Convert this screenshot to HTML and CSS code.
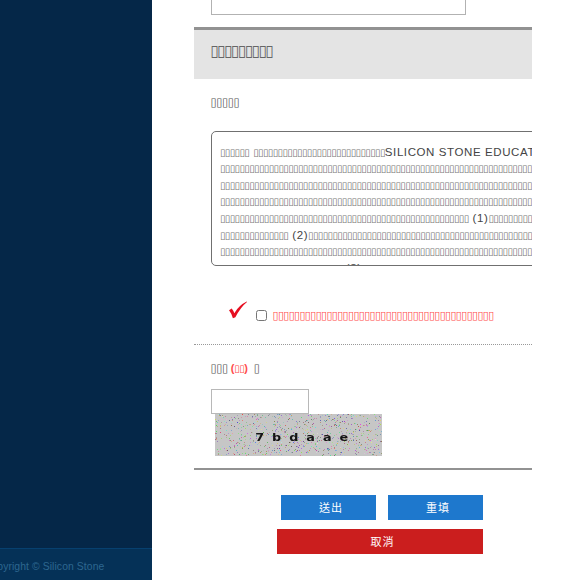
FILE: index.html
```
<!DOCTYPE html>
<html lang="zh-Hant">
<head>
<meta charset="utf-8">
<title>Silicon Stone</title>
<link rel="stylesheet" href="styles.css">
</head>
<body>
<div class="page">
  <aside class="sidebar">
    <footer class="copyright"><span>Copyright © Silicon Stone</span></footer>
  </aside>
  <main class="content">
    <div class="field-large"></div>
    <h2 class="section-title">▯▯▯▯▯▯▯▯▯</h2>
    <p class="label terms-label">▯▯▯▯▯</p>
    <div class="terms">
      <p><i>▯▯▯▯▯▯</i><b class="gap"></b><i>▯▯▯▯▯▯▯▯▯▯▯▯▯▯▯▯▯▯▯▯▯▯▯▯▯▯▯</i>SILICON STONE EDUCATION</p>
      <p><i>▯▯▯▯▯▯▯▯▯▯▯▯▯▯▯▯▯▯▯▯▯▯▯▯▯▯▯▯▯▯▯▯▯▯▯▯▯▯▯▯▯▯▯▯▯▯▯▯▯▯▯▯▯▯▯▯▯▯▯▯▯▯▯▯▯▯</i></p>
      <p><i>▯▯▯▯▯▯▯▯▯▯▯▯▯▯▯▯▯▯▯▯▯▯▯▯▯▯▯▯▯▯▯▯▯▯▯▯▯▯▯▯▯▯▯▯▯▯▯▯▯▯▯▯▯▯▯▯▯▯▯▯▯▯▯▯▯▯</i></p>
      <p><i>▯▯▯▯▯▯▯▯▯▯▯▯▯▯▯▯▯▯▯▯▯▯▯▯▯▯▯▯▯▯▯▯▯▯▯▯▯▯▯▯▯▯▯▯▯▯▯▯▯▯▯▯▯▯▯▯▯▯▯▯▯▯▯▯▯▯</i></p>
      <p><i>▯▯▯▯▯▯▯▯▯▯▯▯▯▯▯▯▯▯▯▯▯▯▯▯▯▯▯▯▯▯▯▯▯▯▯▯▯▯▯▯▯▯▯▯▯▯▯▯▯▯▯</i><b class="gap"></b>(1)<i>▯▯▯▯▯▯▯▯▯▯▯▯</i></p>
      <p><i>▯▯▯▯▯▯▯▯▯▯▯▯▯▯</i><b class="gap"></b>(2)<i>▯▯▯▯▯▯▯▯▯▯▯▯▯▯▯▯▯▯▯▯▯▯▯▯▯▯▯▯▯▯▯▯▯▯▯▯▯▯▯▯▯▯▯▯▯▯▯▯</i></p>
      <p><i>▯▯▯▯▯▯▯▯▯▯▯▯▯▯▯▯▯▯▯▯▯▯▯▯▯▯▯▯▯▯▯▯▯▯▯▯▯▯▯▯▯▯▯▯▯▯▯▯▯▯▯▯▯▯▯▯▯▯▯▯▯▯▯▯▯▯</i></p>
      <p><i>▯▯▯▯▯▯▯▯▯▯▯▯▯▯▯▯▯▯▯▯▯▯▯▯▯</i><b class="gap"></b>(3)<i>▯▯▯▯▯▯▯▯▯▯▯▯▯▯▯▯▯▯▯▯▯▯▯▯▯▯▯▯▯▯▯▯▯▯▯▯▯▯</i></p>
    </div>
    <label class="agree">
      <svg class="tick" width="20" height="18" viewBox="0 0 20 18"><path d="M1 9.2 3.7 7.4Q5.3 9.2 6.3 12.2 11 4.3 18.7.6L19 1Q12.5 6.3 7.4 16.2L4.9 17.2Q3.5 12.3 1 9.2Z" fill="#e60f21"/></svg>
      <input type="checkbox">
      <span>▯▯▯▯▯▯▯▯▯▯▯▯▯▯▯▯▯▯▯▯▯▯▯▯▯▯▯▯▯▯▯▯▯▯▯▯▯▯▯▯▯</span>
    </label>
    <section class="verify">
      <p class="label verify-label">▯▯▯<span class="required"><em>(</em>▯▯<em>)</em></span>▯</p>
      <div class="code-field"></div>
      <div class="captcha"><canvas id="noise" width="167" height="42"></canvas><span>7bdaae</span></div>
    </section>
    <div class="actions">
      <div class="row"><button>送出</button><button>重填</button></div>
      <button class="cancel">取消</button>
    </div>
  </main>
</div>
<script src="noise.js"></script>
</body>
</html>
```
FILE: noise.js
```
const ctx = document.getElementById('noise').getContext('2d');
let seed = 71;
const rnd = () => (seed = (seed * 16807) % 2147483647) / 2147483647;
ctx.fillStyle = '#c6c6c6';
ctx.fillRect(0, 0, 167, 42);
for (let i = 0; i < 850; i++) {
  const c = [0, 0, 0].map(() => Math.floor(60 + rnd() * 180));
  ctx.fillStyle = `rgba(${c[0]},${c[1]},${c[2]},${0.45 + rnd() * 0.5})`;
  ctx.fillRect(Math.floor(rnd() * 167), Math.floor(rnd() * 42), 1, 1);
}
```
FILE: styles.css
```
* { box-sizing: border-box; }
body {
  margin: 0;
  background: #fff;
  color: #555;
  font-family: "Liberation Sans", "Noto Sans CJK TC", sans-serif;
  overflow: hidden;
}
h2, p { margin: 0; font-weight: normal; white-space: nowrap; }
.page { display: flex; height: 580px; }
.sidebar {
  width: 152.4px;
  flex: none;
  display: flex;
  flex-direction: column;
  justify-content: flex-end;
  background: #052748;
}
.copyright {
  height: 32px;
  padding: 11px 48px 0 0;
  display: flex;
  justify-content: flex-end;
  border-top: 1px solid #07406f;
  background: #053157;
  color: #2d6790;
  font-size: 10.4px;
  letter-spacing: .08px;
  line-height: 14px;
  white-space: nowrap;
}
.content {
  width: 338px;
  margin-left: 41.6px;
  overflow: hidden;
}
.field-large {
  width: 255px;
  height: 15px;
  margin-left: 17px;
  border: 1px solid #b2b2b2;
  border-top: 0;
}
.section-title {
  height: 52px;
  margin-top: 12px;
  padding: 11px 0 0 16.5px;
  border-top: 3px solid #929292;
  background: #e4e4e4;
  color: #666;
  font: 15.5px/20px "DejaVu Sans", sans-serif;
  letter-spacing: -1.65px;
}
.label { padding-left: 16.5px; font: 11.5px/16px "DejaVu Sans", sans-serif; letter-spacing: -.6px; }
.terms-label { margin-top: 15px; }
.terms {
  width: 420px;
  height: 135px;
  margin: 21px 0 0 17px;
  padding: 11.5px 8px 0;
  overflow: hidden;
  border: 1px solid #707070;
  border-radius: 5px;
  color: #444;
  font-size: 11.5px;
  letter-spacing: .6px;
}
.terms p { height: 16.65px; line-height: 16.65px; }
.terms i {
  color: #777;
  font: 10px/16px "DejaVu Sans", sans-serif;
  letter-spacing: -.63px;
}
.gap { display: inline-block; width: 4px; }
.agree {
  height: 26px;
  margin: 36px 0 0 33px;
  display: flex;
  align-items: center;
  color: #ff4b4b;
  font: 11px/16px "DejaVu Sans", sans-serif;
  letter-spacing: -.66px;
  white-space: nowrap;
}
.agree span { margin-top: 2px; }
.tick { margin: -11px 8px 0 1px; }
.agree input { width: 11px; height: 11px; margin: 0 5.5px 0 0; }
.verify {
  height: 126px;
  margin-top: 16px;
  border-top: 1px dotted #999;
  border-bottom: 2.5px solid #929292;
}
.verify-label { padding-top: 15px; }
.required { margin: 0 6px 0 3px; color: #ff4b4b; font-size: 10px; }
.required em { font: bold 11px "Liberation Sans", sans-serif; letter-spacing: 0; }
.code-field {
  width: 98px;
  height: 25px;
  margin: 12px 0 0 17px;
  border: 1px solid #b8b8b8;
}
.captcha { display: grid; width: 167px; height: 42px; margin-left: 21px; }
.captcha > * { grid-area: 1 / 1; }
.captcha span {
  padding-left: 33px;
  color: #151515;
  font: bold 10.5px/47px "DejaVu Sans", sans-serif;
  letter-spacing: 6.5px;
  transform: scaleX(1.22);
  transform-origin: left;
}
.actions {
  width: 206px;
  margin: 25px 0 0 83.5px;
  display: flex;
  flex-direction: column;
  gap: 8.5px;
}
.row { display: flex; gap: 12px; padding-left: 4px; }
button {
  flex: 1;
  height: 25px;
  padding: 0 0 0 4px;
  border: 0;
  background: #1e78cd;
  color: #fff;
  font: 11px/25px "Noto Sans CJK TC", sans-serif;
  letter-spacing: 1px;
}
.cancel { flex: none; background: #cb1e1e; }
```
